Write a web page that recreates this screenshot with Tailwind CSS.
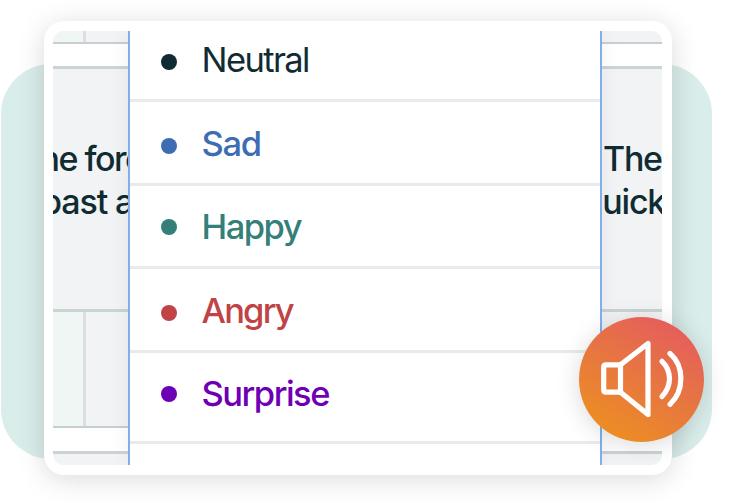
<!DOCTYPE html>
<html lang="en">
<head>
<meta charset="utf-8">
<title>Emotions</title>
<script src="https://cdn.jsdelivr.net/npm/@tailwindcss/browser@4"></script>
</head>
<body class="w-[729px] h-[503px] overflow-hidden bg-white font-['Inter',sans-serif] text-[#102b32]">
<div class="relative w-[729px] h-[503px] overflow-hidden pl-[43.5px] pt-[21px]">
  <div class="absolute left-[1px] top-[64px] w-[711px] h-[395px] rounded-[50px] bg-[#d9edeb]"></div>
  <main class="relative w-[628.5px] h-[454px] rounded-[20px] bg-white p-[10px] pl-[9.5px] shadow-[0_4px_28px_rgba(0,0,0,0.15)]">
    <div class="flex h-full rounded-[10px] overflow-hidden">
      <section class="w-[75px] shrink-0 flex flex-col overflow-hidden">
        <div class="h-[13px] shrink-0 border-b-2 border-[#c6d0cf] flex bg-[#f2f3f5]"><div class="w-[33px] bg-[#f0f6f4] border-r-[3px] border-[#dcdfdf]"></div></div>
        <div class="h-[22px] shrink-0"></div>
        <div class="h-[246px] shrink-0 border-y-[3px] border-t-[#cbd4d4] border-b-[#cbd4d4] bg-[#f2f3f5] pt-[68px]">
          <p class="text-[34px] leading-[43px] font-medium whitespace-nowrap"><span class="block -ml-[13.5px] tracking-[-1.5px]">ne forest</span><span class="block -ml-[12px] tracking-[-1.1px]">past and</span></p>
        </div>
        <div class="h-[116px] shrink-0 border-b-2 border-[#c4cfcf] flex bg-[#f2f3f5]"><div class="w-[33px] bg-[#f0f6f4] border-r-[3px] border-[#dcdfdf]"></div></div>
        <div class="h-[23px] shrink-0"></div>
        <div class="grow border-t-[3px] border-[#cbd4d4] bg-[#f2f3f5]"></div>
      </section>
      <ul class="w-[474px] shrink-0 bg-white border-x-2 border-[#82aeee] text-[34.5px] leading-[42px] shadow-[0_0_20px_rgba(0,0,0,0.06)] relative">
        <li class="h-[71px] pt-[8px] pl-[31px] border-b-[3px] border-[#e8ebeb] flex items-start"><i class="mt-[15px] size-[16px] rounded-full bg-[#102b32]"></i><span class="ml-[24.5px] tracking-[-1.6px]">Neutral</span></li>
        <li class="h-[83.5px] pt-[20.5px] pl-[31px] border-b-[3px] border-[#e8ebeb] flex items-start font-medium text-[#3e6db4]"><i class="mt-[15px] size-[16px] rounded-full bg-[#3e6db4]"></i><span class="ml-[24.5px] tracking-[-1.3px]">Sad</span></li>
        <li class="h-[83.5px] pt-[20px] pl-[31px] border-b-[3px] border-[#e8ebeb] flex items-start font-medium text-[#347f79]"><i class="mt-[13px] size-[16px] rounded-full bg-[#347f79]"></i><span class="ml-[24.5px] tracking-[-1.5px]">Happy</span></li>
        <li class="h-[83.5px] pt-[20.5px] pl-[31px] border-b-[3px] border-[#e8ebeb] flex items-start font-medium text-[#c04446]"><i class="mt-[15px] size-[16px] rounded-full bg-[#c04446]"></i><span class="ml-[24.5px] tracking-[-1.8px]">Angry</span></li>
        <li class="h-[91.5px] pt-[20px] pl-[31px] border-b-[3px] border-[#e8ebeb] flex items-start font-medium text-[#6d00b5]"><i class="mt-[13px] size-[16px] rounded-full bg-[#6d00b5]"></i><span class="ml-[24.5px] tracking-[-1.5px]">Surprise</span></li>
      </ul>
      <section class="grow flex flex-col overflow-hidden">
        <div class="h-[13px] shrink-0 border-b-2 border-[#c6d0cf] bg-[#f2f3f5]"></div>
        <div class="h-[22px] shrink-0"></div>
        <div class="h-[246px] shrink-0 border-y-[3px] border-t-[#cbd4d4] border-b-[#cbd4d4] bg-[#f2f3f5] pt-[68px]">
          <p class="text-[34px] leading-[43px] font-medium whitespace-nowrap"><span class="block ml-[1px] tracking-[-1.3px]">The</span><span class="block -ml-[19.5px] tracking-[-1.2px]">quick</span></p>
        </div>
        <div class="h-[116px] shrink-0 border-b-2 border-[#c4cfcf] bg-[#f2f3f5]"></div>
        <div class="h-[23px] shrink-0"></div>
        <div class="grow border-t-[3px] border-[#cbd4d4] bg-[#f2f3f5]"></div>
      </section>
    </div>
  </main>
  <button aria-label="Play sound" class="absolute left-[579px] top-[317px] size-[125px] rounded-full bg-[linear-gradient(30deg,#ed9020_8%,#e67246_58%,#e65c5e_90%)] shadow-[0_3px_24px_rgba(0,0,0,0.15)]">
    <svg class="size-[125px]" viewBox="579 317 125 125" fill="none" stroke="#fff" stroke-width="5.2" stroke-linecap="round" stroke-linejoin="round"><path d="M620.5 364.8H606Q603.7 364.8 603.7 367.2V389.8Q603.7 392.2 606 392.2H620.5Z"/><path d="M620.5 364.8L648 343.5V414.5L620.5 392.2"/><path d="M662 361.3C672 371 672 386 662 396.5M670 353.5C684.5 366 684.5 391 670 404.3"/></svg>
  </button>
</div>
</body>
</html>
